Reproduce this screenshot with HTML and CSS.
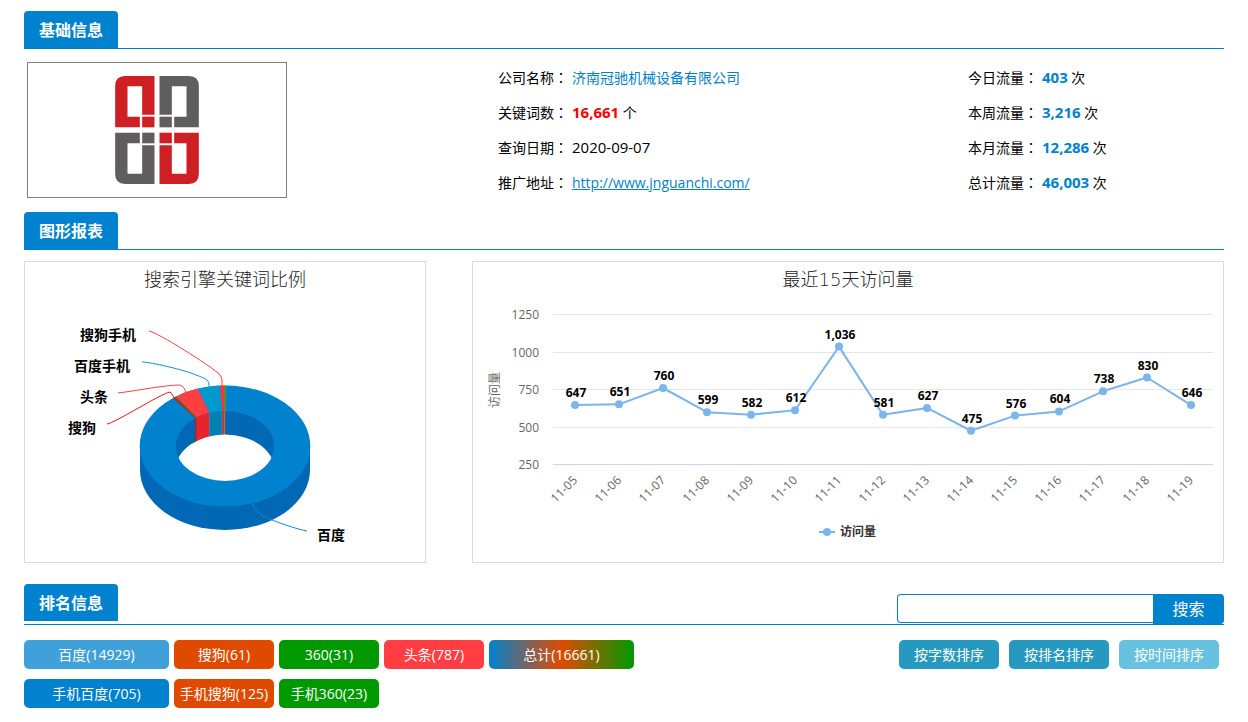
FILE: index.html
```html
<!DOCTYPE html>
<html lang="zh-CN">
<head>
<meta charset="utf-8">
<meta name="viewport" content="width=device-width, initial-scale=1">
<title>济南冠驰机械设备有限公司</title>
<link rel="stylesheet" href="styles.css">
</head>
<body>
<section>
  <header class="section-head"><h2 class="tab">基础信息</h2></header>
  <div class="info">
    <div class="logo-box">
      <svg class="logo" viewBox="345 227 251 324" role="img" aria-label="公司标志">
        <defs>
          <g id="quarter">
            <path d="M375 227H463V343H426V258H382V349H419V381H345V257Q345 227 375 227Z"/>
            <path d="M426 349H463V381H426Z"/>
          </g>
        </defs>
        <use href="#quarter" class="logo-red"/>
        <use href="#quarter" class="logo-gray" transform="translate(941 0) scale(-1 1)"/>
        <use href="#quarter" class="logo-gray" transform="translate(0 778) scale(1 -1)"/>
        <use href="#quarter" class="logo-red" transform="translate(941 778) scale(-1 -1)"/>
      </svg>
    </div>
    <dl class="facts">
      <div class="fact"><dt>公司名称<span class="colon" lang="zh-Hant">：</span></dt><dd><a class="company" href="#">济南冠驰机械设备有限公司</a></dd></div>
      <div class="fact"><dt>关键词数<span class="colon" lang="zh-Hant">：</span></dt><dd><b class="count-red">16,661</b> 个</dd></div>
      <div class="fact"><dt>查询日期<span class="colon" lang="zh-Hant">：</span></dt><dd class="date">2020-09-07</dd></div>
      <div class="fact"><dt>推广地址<span class="colon" lang="zh-Hant">：</span></dt><dd><a class="site" href="http://www.jnguanchi.com/">http://www.jnguanchi.com/</a></dd></div>
    </dl>
    <dl class="facts">
      <div class="fact"><dt>今日流量<span class="colon" lang="zh-Hant">：</span></dt><dd><b class="count">403</b> 次</dd></div>
      <div class="fact"><dt>本周流量<span class="colon" lang="zh-Hant">：</span></dt><dd><b class="count">3,216</b> 次</dd></div>
      <div class="fact"><dt>本月流量<span class="colon" lang="zh-Hant">：</span></dt><dd><b class="count">12,286</b> 次</dd></div>
      <div class="fact"><dt>总计流量<span class="colon" lang="zh-Hant">：</span></dt><dd><b class="count">46,003</b> 次</dd></div>
    </dl>
  </div>
</section>

<section>
  <header class="section-head"><h2 class="tab">图形报表</h2></header>
  <div class="charts">
    <div class="chart">
      <svg viewBox="0 0 400 300" role="img" aria-label="搜索引擎关键词比例">
        <defs><clipPath id="rim"><ellipse rx="49.3" ry="35"/></clipPath></defs>
        <text class="chart-title" x="200" y="24">搜索引擎关键词比例</text>
        <g transform="translate(200 184)">
          <path fill="#0068b4" d="M-85 0V24A85 60 0 0 0 85 24V0Z"/>
          <ellipse fill="#0082ce" rx="85.3" ry="60.5"/>
          <path fill="#d9140f" d="M-51.8-48L-50.3-48.9L-29.1-28.3L-30-27.8Z"/>
          <path fill="#ff3d43" d="M-49.5-49.3A85.3 60.5 0 0 1-27-57.4L-15.6-33.2A49.3 35 0 0 0-28.6-28.5Z"/>
          <path fill="#0099cc" d="M-27-57.4A85.3 60.5 0 0 1-4.8-60.4L-2.8-34.9A49.3 35 0 0 0-15.6-33.2Z"/>
          <path fill="#ff3336" d="M-4.8-60.4L-.7-60.5L-.4-35L-2.8-34.9Z"/>
          <path stroke="#3c7d14" stroke-width="1.3" d="M-49.8-49.1L-28.8-28.4"/>
          <path stroke="#4f9f1c" stroke-width="1.6" d="M.3-60.5V-35"/>
          <g clip-path="url(#rim)">
            <ellipse fill="#0068b4" rx="49.3" ry="35"/>
            <path fill="#e8242a" d="M-29-36H-15.6V0H-29Z"/>
            <path fill="#0080b3" d="M-15.6-36H-2.8V0H-15.6Z"/>
            <path fill="#d9262b" d="M-2.8-36H0V0H-2.8Z"/>
            <path fill="none" stroke="#93272b" stroke-width="1.2" d="M-29.4-36V0"/>
            <path fill="none" stroke="#d8792b" stroke-width=".8" d="M-.4-36V0"/>
            <path fill="none" stroke="#7d7f95" stroke-width=".7" d="M-15.6-36V0M-2.8-36V0"/>
            <ellipse fill="#fff" cy="23.5" rx="49.3" ry="35"/>
          </g>
        </g>
        <g class="leader">
          <path stroke="#ff3d43" d="M124 69C132 70 186 104 194 112Q197 115 197 118V124"/>
          <path stroke="#0099cc" d="M117 100C125 100 160 108 171 113C182 117 184 118 184 124"/>
          <path stroke="#ff3d43" d="M93 131C110 129 140 123 155 123Q159 124 161 130"/>
          <path stroke="#f01414" d="M82 162C90 161 135 132 145 130Q147 131 149 136"/>
          <path stroke="#0e8bd2" d="M228 241Q228 248 238 254C250 260 275 268 282 269"/>
        </g>
        <g class="slice-label">
          <text x="55" y="78">搜狗手机</text>
          <text x="49" y="109">百度手机</text>
          <text x="55" y="140">头条</text>
          <text x="43" y="171">搜狗</text>
          <text x="292" y="278">百度</text>
        </g>
      </svg>
    </div>
    <div class="chart">
      <svg id="visits" viewBox="0 0 750 300" role="img" aria-label="最近15天访问量">
        <text class="chart-title" x="375" y="24">最近15天访问量</text>
        <text class="axis-title" transform="translate(26 128) rotate(-90)">访问量</text>
      </svg>
    </div>
  </div>
</section>

<section>
  <header class="section-head ranking-head">
    <h2 class="tab">排名信息</h2>
    <form class="search">
      <input class="search-box" type="text" aria-label="搜索关键词">
      <button class="search-button" type="button">搜索</button>
    </form>
  </header>
  <div class="toolbar">
    <div class="engines">
      <div class="button-row">
        <button class="pill wide baidu active" type="button">百度(14929)</button>
        <button class="pill sogou" type="button">搜狗(61)</button>
        <button class="pill so360" type="button">360(31)</button>
        <button class="pill toutiao" type="button">头条(787)</button>
        <button class="pill wide total" type="button">总计(16661)</button>
      </div>
      <div class="button-row">
        <button class="pill wide baidu" type="button">手机百度(705)</button>
        <button class="pill sogou" type="button">手机搜狗(125)</button>
        <button class="pill so360" type="button">手机360(23)</button>
      </div>
    </div>
    <div class="button-row sorts">
      <button class="pill sort" type="button">按字数排序</button>
      <button class="pill sort" type="button">按排名排序</button>
      <button class="pill sort active" type="button">按时间排序</button>
    </div>
  </div>
</section>
<script src="chart.js"></script>
</body>
</html>
```
FILE: styles.css
```css
* { box-sizing: border-box; }

body {
  margin: 0;
  padding: 11px 24px 14px;
  background: #fff;
  color: #000;
  font: 14px/20px "Open Sans", "Noto Sans CJK SC", sans-serif;
}

h2, dl, dd { margin: 0; }
button, input { font: inherit; }

.section-head {
  display: flex;
  align-items: flex-start;
  justify-content: space-between;
  border-bottom: 1px solid #0082ce;
}
.tab {
  padding: 2px 15px 0;
  border-radius: 4px 4px 0 0;
  background: #0082ce;
  color: #fff;
  font-size: 16px;
  line-height: 35px;
}

.info {
  display: grid;
  grid-template-columns: 474fr 470fr 256fr;
  align-items: start;
  padding: 11px 0 12px;
}
.logo-box {
  display: flex;
  align-items: center;
  justify-content: center;
  width: 260px;
  height: 136px;
  margin: 2px 0 0 3px;
  border: 1px solid #808080;
}
.logo { width: 84px; height: 108px; }
.logo-red { fill: #ce1f25; }
.logo-gray { fill: #5f5d5e; }

.fact { display: flex; gap: 4px; line-height: 35px; white-space: nowrap; }
.colon { font-family: "Noto Sans CJK TC", sans-serif; }
.company { color: #0082ce; text-decoration: none; }
.site { color: #0082ce; }
.date { font-size: 15px; }
.count { color: #0082ce; font-size: 15px; }
.count-red { color: #f00; font-size: 15px; }

.charts {
  display: grid;
  grid-template-columns: 402fr 752fr;
  gap: 46px;
  padding: 11px 0 21px;
}
.chart { border: 1px solid #dcdcdc; }
.chart svg { display: block; width: 100%; height: auto; }
.chart-title {
  fill: #222;
  font-family: "DejaVu Sans", "Noto Sans CJK SC", sans-serif;
  font-size: 18px;
  font-weight: 300;
  text-anchor: middle;
}
.leader { fill: none; stroke-width: 1; }
.slice-label { font-size: 14px; font-weight: bold; }
.axis-title { fill: #666; font-size: 12px; text-anchor: middle; }
.axis { fill: #666; font-size: 12px; text-anchor: end; }
.value { font-size: 12px; font-weight: bold; text-anchor: middle; }
.grid-line { stroke: #e6e6e6; }
.base-line { stroke: #ccd6eb; }
.series { fill: none; stroke: #7cb5ec; stroke-width: 2; stroke-linejoin: round; }
.dot { fill: #7cb5ec; }
.legend { fill: #333; font-size: 12px; font-weight: bold; }

.ranking-head { min-height: 41px; }
.search { display: flex; align-self: flex-end; align-items: flex-start; }
.search-box {
  width: 256px;
  height: 29px;
  padding: 0 8px;
  border: 1px solid #0082ce;
  border-right: 0;
  border-radius: 4px 0 0 4px;
  background: #fff;
}
.search-button {
  width: 71px;
  height: 30px;
  padding: 0;
  border: 0;
  border-radius: 0 4px 4px 0;
  background: #0082ce;
  color: #fff;
  font-size: 16px;
  line-height: 28px;
}

.toolbar { display: flex; justify-content: space-between; gap: 20px; padding-top: 15px; }
.engines { display: grid; gap: 10px; align-content: start; }
.button-row { display: flex; align-items: flex-start; gap: 5px; }
.sorts { gap: 10px; padding-right: 5px; }
.pill {
  width: 100px;
  height: 29px;
  padding: 0;
  border: 0;
  border-radius: 5px;
  color: #fff;
  white-space: nowrap;
}
.wide { width: 145px; }
.baidu { background: #0082ce; }
.baidu.active { background: #40a1da; }
.sogou { background: #e04a00; }
.so360 { background: #009900; }
.toutiao { background: #ff3d43; }
.total { background: linear-gradient(to right, #0082ce, #e04a00, #009900); }
.sort { background: #2599bf; }
.sort.active { background: #66c2df; }
```
FILE: chart.js
```js
const svg = document.getElementById("visits");
const visits = [647, 651, 760, 599, 582, 612, 1036, 581, 627, 475, 576, 604, 738, 830, 646];
const toX = i => 102 + 44 * i;
const toY = v => 202.5 - (v - 250) * 0.15;

function add(tag, attrs, text) {
  const el = document.createElementNS("http://www.w3.org/2000/svg", tag);
  for (const key in attrs) el.setAttribute(key, attrs[key]);
  if (text) el.textContent = text;
  svg.appendChild(el);
}

for (let v = 250; v <= 1250; v += 250) {
  const y = Math.floor(toY(v)) + 0.5;
  add("line", { class: v === 250 ? "base-line" : "grid-line", x1: 80, x2: 740, y1: y, y2: y });
  add("text", { class: "axis", x: 66, y: y + 4 }, String(v));
}

add("polyline", { class: "series", points: visits.map((v, i) => toX(i) + "," + toY(v)).join(" ") });

visits.forEach((v, i) => {
  const day = String(5 + i).padStart(2, "0");
  add("circle", { class: "dot", cx: toX(i), cy: toY(v), r: 4 });
  add("text", { class: "value", x: toX(i) + 1, y: toY(v) - 8 }, v.toLocaleString("en-US"));
  add("text", { class: "axis", transform: `translate(${toX(i) + 3} 219) rotate(-45)` }, "11-" + day);
});

add("line", { class: "series", x1: 346, x2: 362, y1: 270, y2: 270 });
add("circle", { class: "dot", cx: 354, cy: 270, r: 4 });
add("text", { class: "legend", x: 367, y: 274 }, "访问量");
```
